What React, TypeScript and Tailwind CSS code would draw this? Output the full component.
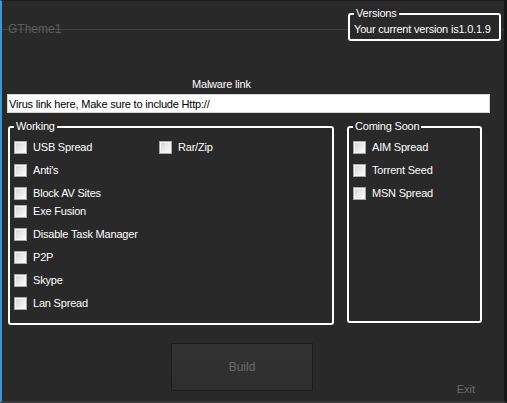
import React from 'react'

const WORKING_LEFT: { label: string; mt: string }[] = [
  { label: 'USB Spread', mt: 'mt-0' },
  { label: "Anti's", mt: 'mt-[10px]' },
  { label: 'Block AV Sites', mt: 'mt-[10px]' },
  { label: 'Exe Fusion', mt: 'mt-[5px]' },
  { label: 'Disable Task Manager', mt: 'mt-[10px]' },
  { label: 'P2P', mt: 'mt-[10px]' },
  { label: 'Skype', mt: 'mt-[10px]' },
  { label: 'Lan Spread', mt: 'mt-[10px]' },
]

const COMING_SOON = ['AIM Spread', 'Torrent Seed', 'MSN Spread']

function CheckBox({ label, className = '' }: { label: string; className?: string }) {
  return (
    <label className={`flex items-center gap-[6px] h-[13px] ${className}`}>
      <span className="w-[13px] h-[13px] shrink-0 border border-[#a8a8a8] bg-[#f6f6f6] p-[1px]">
        <span className="block w-full h-full bg-gradient-to-br from-[#d6d6d6] to-[#fbfbfb]" />
      </span>
      <span className="text-white text-[11px] leading-[13px] tracking-[-0.2px] whitespace-nowrap">{label}</span>
    </label>
  )
}

function GroupBox({
  title,
  className = '',
  children,
}: {
  title: string
  className?: string
  children: React.ReactNode
}) {
  return (
    <fieldset className={`border-2 border-white rounded-[3px] ${className}`}>
      <legend className="ml-[4px] px-[2px] text-white text-[11px] leading-[13px] tracking-[-0.2px]">{title}</legend>
      {children}
    </fieldset>
  )
}

export default function App() {
  return (
    <div className="relative w-[507px] h-[403px] bg-[#292929] font-['Liberation_Sans',Arial,sans-serif] border-l-2 border-l-[#2b9de8] border-r-[3px] border-r-[#161616] border-t border-t-[#1d1d1d] border-b-2 border-b-[#3a3a3a] flex flex-col overflow-hidden select-none">
      {/* Title bar */}
      <div className="h-[29px] shrink-0 border-b border-[#414141] pl-[6px] pt-[15px]">
        <span className="text-[12px] leading-[13px] text-[#5e5e5e]">GTheme1</span>
      </div>

      {/* Versions */}
      <GroupBox title="Versions" className="absolute left-[346px] top-[6px] w-[153px] h-[34px] bg-[#292929]">
        <div className="pl-[4px] pt-[3px] text-white text-[11px] leading-[13px] tracking-[-0.2px] whitespace-nowrap">
          Your current version is1.0.1.9
        </div>
      </GroupBox>

      {/* Malware link */}
      <div className="mt-[48px] pl-[190px] text-white text-[11px] leading-[13px] tracking-[-0.2px]">Malware link</div>
      <input
        readOnly
        defaultValue="Virus link here, Make sure to include Http://"
        className="mt-[3px] ml-[5px] w-[483px] h-[19px] bg-white border border-[#d4d4d4] px-[1px] text-black text-[11px] tracking-[-0.2px] outline-none"
      />

      {/* Groups */}
      <div className="flex items-start mt-[7px] ml-[6px]">
        <GroupBox title="Working" className="w-[326px] h-[205px]">
          <div className="flex pl-[4px] pt-[8px]">
            <div className="flex flex-col w-[145px]">
              {WORKING_LEFT.map(item => (
                <CheckBox key={item.label} label={item.label} className={item.mt} />
              ))}
            </div>
            <div className="flex flex-col">
              <CheckBox label="Rar/Zip" />
            </div>
          </div>
        </GroupBox>

        <GroupBox title="Coming Soon" className="ml-[13px] w-[135px] h-[203px]">
          <div className="flex flex-col gap-[10px] pl-[4px] pt-[8px]">
            {COMING_SOON.map(label => (
              <CheckBox key={label} label={label} />
            ))}
          </div>
        </GroupBox>
      </div>

      {/* Bottom */}
      <div className="flex items-start">
        <button className="mt-[18px] ml-[169px] w-[142px] h-[48px] bg-gradient-to-b from-[#333333] to-[#2e2e2e] border border-[#1c1c1c] text-[#6b6b6b] text-[12px]">
          Build
        </button>
        <span className="mt-[58px] ml-auto mr-[29px] text-[#6b6b6b] text-[11px] leading-[13px]">Exit</span>
      </div>
    </div>
  )
}
